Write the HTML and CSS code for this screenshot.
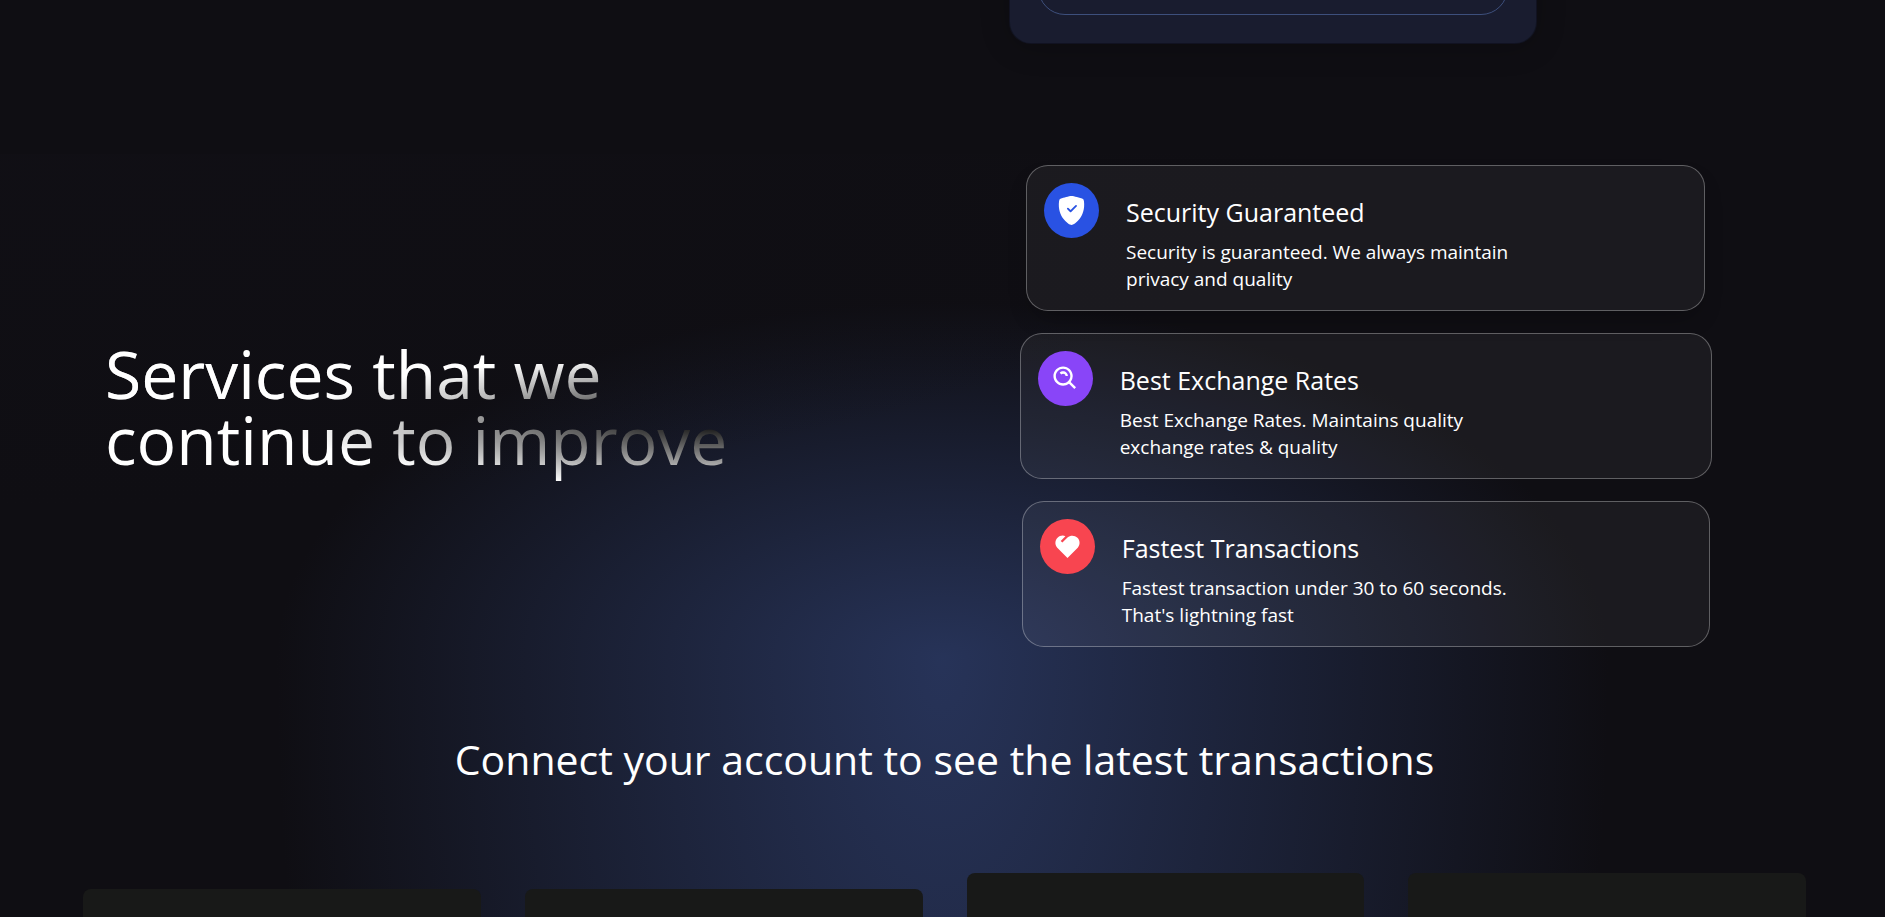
FILE: index.html
```html
<!DOCTYPE html>
<html lang="en">
<head>
<meta charset="utf-8">
<title>Services</title>
<link rel="stylesheet" href="styles.css">
</head>
<body>
<section class="welcome">
  <form class="send-form">
    <button class="send-button" type="button" aria-label="Send now"></button>
  </form>
</section>

<section class="services">
  <div class="services-intro">
    <h1 class="services-title">Services that we<br>continue to improve</h1>
  </div>
  <div class="services-list">
    <article class="card">
      <div class="card-icon card-icon-blue">
        <svg class="icon" viewBox="0 0 16 16" aria-hidden="true"><path fill-rule="evenodd" d="M8 0c-.69 0-1.843.265-2.928.56-1.11.3-2.229.655-2.887.87a1.54 1.54 0 0 0-1.044 1.262c-.596 4.477.787 7.795 2.465 9.99a11.777 11.777 0 0 0 2.517 2.453c.386.273.744.482 1.048.625.28.132.581.24.829.24s.548-.108.829-.24a7.159 7.159 0 0 0 1.048-.625 11.775 11.775 0 0 0 2.517-2.453c1.678-2.195 3.061-5.513 2.465-9.99a1.541 1.541 0 0 0-1.044-1.263 62.467 62.467 0 0 0-2.887-.87C9.843.266 8.69 0 8 0zm2.146 5.146a.5.5 0 0 1 .708.708l-3 3a.5.5 0 0 1-.708 0l-1.5-1.5a.5.5 0 1 1 .708-.708L7.5 7.793l2.646-2.647z"/></svg>
      </div>
      <div class="card-text">
        <h3 class="card-title">Security Guaranteed</h3>
        <p class="card-note">Security is guaranteed. We always maintain privacy and quality</p>
      </div>
    </article>
    <article class="card">
      <div class="card-icon card-icon-purple">
        <svg class="icon" viewBox="0 0 24 24" aria-hidden="true"><path d="M10 18a7.952 7.952 0 0 0 4.897-1.688l4.396 4.396 1.414-1.414-4.396-4.396A7.952 7.952 0 0 0 18 10c0-4.411-3.589-8-8-8s-8 3.589-8 8 3.589 8 8 8zm0-14c3.309 0 6 2.691 6 6s-2.691 6-6 6-6-2.691-6-6 2.691-6 6-6z"/><path d="M11.412 8.586c.379.38.588.882.588 1.414h2a3.977 3.977 0 0 0-1.174-2.828c-1.514-1.512-4.139-1.512-5.652 0l1.412 1.416c.76-.758 2.07-.756 2.826-.002z"/></svg>
      </div>
      <div class="card-text">
        <h3 class="card-title">Best Exchange Rates</h3>
        <p class="card-note">Best Exchange Rates. Maintains quality exchange rates &amp; quality</p>
      </div>
    </article>
    <article class="card">
      <div class="card-icon card-icon-red">
        <svg class="icon" viewBox="0 0 24 24" aria-hidden="true"><path d="M20.243 4.757c2.262 2.268 2.34 5.88.236 8.236l-8.48 8.492-8.478-8.492c-2.104-2.356-2.025-5.974.236-8.236C5.515 3 8.093 2.56 10.261 3.44L6.343 7.358l1.414 1.415L12 4.53l-.013-.014.014.013c2.349-2.109 5.979-2.039 8.242.228z"/></svg>
      </div>
      <div class="card-text">
        <h3 class="card-title">Fastest Transactions</h3>
        <p class="card-note">Fastest transaction under 30 to 60 seconds. That's lightning fast</p>
      </div>
    </article>
  </div>
</section>

<section class="transactions">
  <h2 class="transactions-title">Connect your account to see the latest transactions</h2>
  <div class="transactions-grid">
    <article class="transaction transaction-low"></article>
    <article class="transaction transaction-low"></article>
    <article class="transaction"></article>
    <article class="transaction"></article>
  </div>
</section>
</body>
</html>
```

FILE: styles.css
```css
* {
  box-sizing: border-box;
}

body {
  margin: 0;
  height: 100vh;
  overflow: hidden;
  background: #0f0e13;
  color: #fff;
  font-family: "Open Sans", "Noto Sans", sans-serif;
}

h1, h2, h3, p {
  margin: 0;
  font-weight: 400;
}

/* Welcome */
.welcome {
  display: flex;
  justify-content: flex-end;
  align-items: flex-end;
  height: 154px;
  padding: 0 348px 110px 0;
  overflow: hidden;
}

.send-form {
  width: 528px;
  padding: 28px;
  border: 1px solid rgba(0, 0, 0, 0.3);
  border-radius: 22px;
  background: rgba(39, 51, 89, 0.4);
  box-shadow: 0 4px 30px rgba(0, 0, 0, 0.2);
}

.send-button {
  display: block;
  width: 100%;
  height: 54px;
  border: 1px solid #3d4f7c;
  border-radius: 27px;
  background: transparent;
}

/* Services */
.services {
  display: flex;
  align-items: center;
  padding: 0 99px 0 105px;
  background-image:
    radial-gradient(at 0% 0%, hsl(253, 16%, 7%) 0, transparent 50%),
    radial-gradient(at 50% 100%, hsl(225, 39%, 25%) 0, transparent 50%);
}

.services-intro {
  display: flex;
  flex: 1;
}

.services-title {
  padding: 11px 0;
  font-size: 66px;
  line-height: 66px;
  color: transparent;
  background-color: #fff;
  background-image:
    radial-gradient(at 4% 36%, #fff 0, transparent 53%),
    radial-gradient(at 100% 60%, #000 0, transparent 50%);
  background-clip: text;
  -webkit-background-clip: text;
}

.services-list {
  display: flex;
  flex: 1;
  flex-direction: column;
  align-items: center;
  gap: 22px;
  padding: 11px 0;
}

.card {
  display: flex;
  align-items: flex-start;
  gap: 27px;
  padding: 17px 25px 17px 17px;
  border: 1px solid rgba(255, 255, 255, 0.3);
  border-radius: 22px;
  background: rgba(255, 255, 255, 0.05);
}

.card:first-child {
  box-shadow: 0 12px 24px -8px rgba(0, 0, 0, 0.3);
}

.card-icon {
  display: flex;
  justify-content: center;
  align-items: center;
  width: 55px;
  height: 55px;
  border-radius: 50%;
}

.card-icon-blue { background: #2952e3; }
.card-icon-purple { background: #8945f8; }
.card-icon-red { background: #f84550; }

.icon {
  width: 29px;
  height: 29px;
  fill: #fff;
}

.card-title {
  margin-top: 10px;
  font-size: 25px;
  line-height: 38px;
}

.card-note {
  width: 75%;
  margin-top: 8px;
  font-size: 19px;
  line-height: 27px;
}

/* Transactions */
.transactions {
  padding: 76px 57px 66px 61px;
  background-image:
    radial-gradient(at 0% 100%, hsl(253, 16%, 7%) 0, transparent 50%),
    radial-gradient(at 50% 0%, hsl(225, 39%, 25%) 0, transparent 50%);
}

.transactions-title {
  font-size: 41px;
  line-height: 50px;
  text-align: center;
}

.transactions-grid {
  display: grid;
  grid-template-columns: repeat(4, 1fr);
  gap: 44px;
  padding: 89px 22px 0;
}

.transaction {
  min-height: 1600px;
  border-radius: 8px;
  background: #181918;
}

.transaction-low {
  margin-top: 16px;
}
```
